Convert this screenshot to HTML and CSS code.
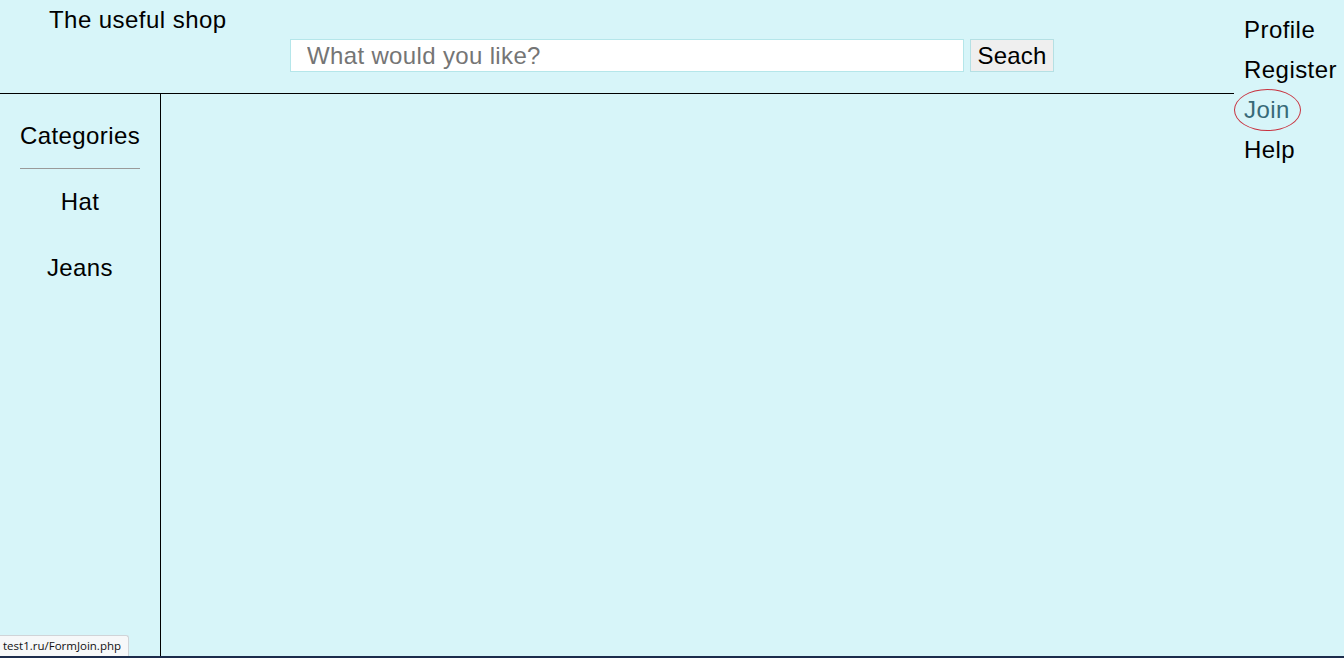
FILE: index.html
```html
<!DOCTYPE html>
<html lang="en">
<head>
<meta charset="utf-8">
<title>The useful shop</title>
<link rel="stylesheet" href="styles.css">
</head>
<body>
<div class="page">
  <div class="main">
    <header class="header">
      <div class="logo">The useful shop</div>
      <form class="search">
        <input class="search-input" type="text" placeholder="What would you like?">
        <button class="search-btn" type="button">Seach</button>
      </form>
    </header>
    <div class="body">
      <aside class="sidebar">
        <div class="cat-title">Categories</div>
        <hr class="cat-rule">
        <a class="cat-link cat-first" href="#">Hat</a>
        <a class="cat-link" href="#">Jeans</a>
      </aside>
      <section class="content"></section>
    </div>
  </div>
  <nav class="nav">
    <a class="nav-link" href="#">Profile</a>
    <a class="nav-link" href="#">Register</a>
    <a class="nav-link nav-join" href="#">Join</a>
    <a class="nav-link" href="#">Help</a>
  </nav>
</div>
<div class="status">test1.ru/FormJoin.php</div>
</body>
</html>
```
FILE: styles.css
```css
html, body {
  margin: 0;
  padding: 0;
}
body {
  width: 1344px;
  height: 658px;
  background: #d7f5f9;
  font-family: "Liberation Sans", Arial, sans-serif;
  color: #000;
  overflow: hidden;
  position: relative;
}
.page {
  display: flex;
  height: 656px;
  border-bottom: 2px solid #1c2c4c;
}
.main {
  width: 1234px;
  display: flex;
  flex-direction: column;
}
.header {
  height: 94px;
  box-sizing: border-box;
  border-bottom: 1px solid #000;
}
.logo {
  font-size: 24px;
  line-height: 28px;
  letter-spacing: 0.45px;
  padding: 6px 0 0 49px;
}
.search {
  display: flex;
  gap: 6px;
  margin: 5px 0 0 290px;
}
.search-input {
  width: 674px;
  height: 33px;
  box-sizing: border-box;
  border: 1px solid #b5e6ea;
  background: #fff;
  font-family: "Liberation Sans", Arial, sans-serif;
  font-size: 24px;
  letter-spacing: 0.35px;
  padding: 0 0 0 16px;
  outline: none;
}
.search-input::placeholder {
  color: #757575;
}
.search-btn {
  width: 84px;
  height: 33px;
  box-sizing: border-box;
  border: 1px solid #b5e0e4;
  background: #efefef;
  font-family: "Liberation Sans", Arial, sans-serif;
  font-size: 24px;
  letter-spacing: 0.2px;
  color: #000;
  padding: 0;
}
.body {
  flex: 1;
  display: flex;
}
.sidebar {
  width: 160px;
  border-right: 1px solid #000;
  display: flex;
  flex-direction: column;
  align-items: center;
  padding-top: 28px;
}
.cat-title {
  font-size: 24px;
  line-height: 28px;
  letter-spacing: 0.4px;
}
.cat-rule {
  width: 120px;
  margin: 18px 0 0 0;
  border: 0;
  border-top: 1px solid #9a9a9a;
  height: 0;
}
.cat-link {
  font-size: 24px;
  line-height: 28px;
  letter-spacing: 0.4px;
  color: #000;
  text-decoration: none;
  margin-top: 38px;
}
.cat-link.cat-first {
  margin-top: 19px;
}
.content {
  flex: 1;
}
.nav {
  flex: 1;
  display: flex;
  flex-direction: column;
  align-items: flex-start;
  padding: 10px 0 0 10px;
}
.nav-link {
  font-size: 24px;
  line-height: 40px;
  letter-spacing: 0.45px;
  color: #000;
  text-decoration: none;
}
.nav-join {
  color: #386a78;
  border: 1px solid #c8323f;
  border-radius: 50%;
  padding: 0 10px 0 9px;
  margin: -1px 0 -1px -10px;
}
.status {
  position: absolute;
  left: 0;
  bottom: 2px;
  height: 20px;
  padding: 0 7px 0 3px;
  background: #f6f8f9;
  border: 1px solid #d0d4d8;
  border-left: 0;
  border-bottom: 0;
  border-top-right-radius: 3px;
  font-family: "Open Sans", "Noto Sans", sans-serif;
  font-size: 11.5px;
  line-height: 20px;
  color: #111;
}
```
